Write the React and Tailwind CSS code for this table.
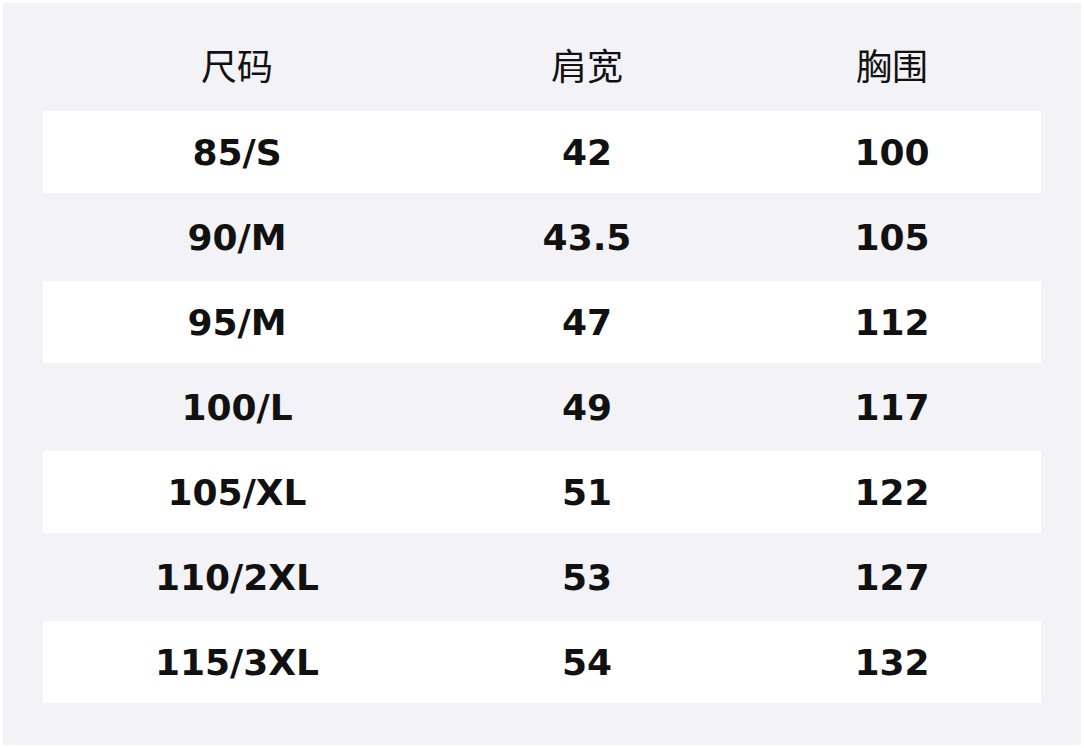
import React from 'react';

const rows = [
  ['85/S', '42', '100'],
  ['90/M', '43.5', '105'],
  ['95/M', '47', '112'],
  ['100/L', '49', '117'],
  ['105/XL', '51', '122'],
  ['110/2XL', '53', '127'],
  ['115/3XL', '54', '132'],
];

const cols = 'grid grid-cols-[388px_312px_1fr] items-center text-center';

export default function App() {
  return (
    <div className="w-[1084px] h-[748px] bg-white p-[3px]">
      <div className="h-full bg-[#f2f2f7] pt-[20px] px-[40px] text-[#111111]">
        {/* header */}
        <div
          className={`${cols} h-[88px] pb-[6px] text-[36px]`}
          style={{ fontFamily: '"Noto Sans CJK SC", "Noto Sans", sans-serif' }}
        >
          <div>尺码</div>
          <div>肩宽</div>
          <div>胸围</div>
        </div>

        {/* size rows */}
        <div style={{ fontFamily: '"DejaVu Sans", sans-serif' }}>
          {rows.map((r, i) => (
            <div
              key={r[0]}
              className={
                i % 2 === 0
                  ? `${cols} h-[82px] pt-[2px] bg-white text-[36px] font-bold`
                  : `${cols} h-[88px] pt-[2px] text-[36px] font-bold`
              }
            >
              <div>{r[0]}</div>
              <div>{r[1]}</div>
              <div>{r[2]}</div>
            </div>
          ))}
        </div>
      </div>
    </div>
  );
}
